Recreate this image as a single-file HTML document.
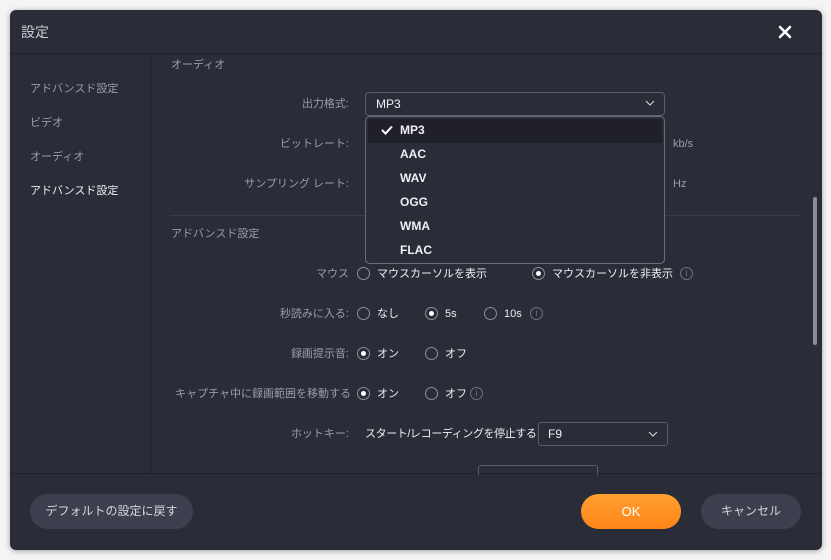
<!DOCTYPE html>
<html><head><meta charset="utf-8"><style>
*{margin:0;padding:0;box-sizing:border-box}
body{width:831px;height:560px;background:#f4f4f4;font-family:"Liberation Sans","Noto Sans CJK JP",sans-serif;position:relative;overflow:hidden}
.dlg{position:absolute;left:10px;top:10px;width:812px;height:540px;background:#2a2c37;border-radius:6px;box-shadow:0 1px 6px rgba(0,0,0,.35);overflow:hidden}
.a{position:absolute;white-space:nowrap;line-height:16px}
.t{color:#9a9daa;font-size:11px}
.w{color:#eef0f5;font-size:11px}
.L{position:absolute;right:473px;white-space:nowrap;color:#9a9daa;font-size:11px;line-height:16px}
.b{font-size:12px;font-weight:bold}
.r{position:absolute;width:13px;height:13px;border:1px solid #8d909c;border-radius:50%}
.r.on::after{content:"";position:absolute;left:3px;top:3px;width:5px;height:5px;border-radius:50%;background:#fff}
.i{position:absolute;width:13px;height:13px;border:1px solid #6f7280;border-radius:50%;color:#6f7280;font-size:9px;text-align:center;line-height:11px}
.btn{position:absolute;border-radius:18px;text-align:center;font-size:12px}
</style></head><body>
<div class="dlg">
 <div class="a" style="left:11px;top:14px;color:#c9cbd3;font-size:14px">設定</div>
 <svg style="position:absolute;left:768px;top:15px" width="14" height="14" viewBox="0 0 14 14"><path d="M2 2L12 12M12 2L2 12" stroke="#fff" stroke-width="2.6" stroke-linecap="round"/></svg>
 <div style="position:absolute;left:0;top:43px;width:812px;height:1px;background:#1f2129"></div>
 <div style="position:absolute;left:140px;top:44px;width:1px;height:419px;background:#1f2129"></div>
 <div style="position:absolute;left:0;top:463px;width:812px;height:1px;background:#1f2129"></div>
 <div class="a t" style="left:20px;top:71px">アドバンスド設定</div>
 <div class="a t" style="left:20px;top:105px">ビデオ</div>
 <div class="a t" style="left:20px;top:139px">オーディオ</div>
 <div class="a w" style="left:20px;top:173px">アドバンスド設定</div>

 <div class="a t" style="left:161px;top:47px">オーディオ</div>
 <div class="L" style="top:86px">出力格式:</div>
 <div class="L" style="top:126px">ビットレート:</div>
 <div class="L" style="top:166px">サンプリング レート:</div>
 <div class="a t" style="left:663px;top:126px">kb/s</div>
 <div class="a t" style="left:663px;top:166px">Hz</div>
 <div style="position:absolute;left:160px;top:205px;width:630px;height:1px;background:#3a3d48"></div>
 <div class="a t" style="left:161px;top:216px">アドバンスド設定</div>

 <div style="position:absolute;left:355px;top:82px;width:300px;height:24px;border:1px solid #5a5d68;border-radius:4px;background:#2a2c37"></div>
 <div class="a w b" style="left:366px;top:86px;font-weight:normal">MP3</div>
 <svg style="position:absolute;left:635px;top:90px" width="10" height="6" viewBox="0 0 10 6"><path d="M1 1L5 5L9 1" fill="none" stroke="#ddd" stroke-width="1"/></svg>
 <div style="position:absolute;left:355px;top:106px;width:300px;height:148px;border:1px solid #6a6d78;border-radius:5px;background:#2a2c37">
  <div style="position:absolute;left:2px;top:2px;width:294px;height:24px;background:#1f2028"></div>
 </div>
 <svg style="position:absolute;left:371px;top:115px" width="12" height="10" viewBox="0 0 12 10"><path d="M1 5L4.5 8.5L11 1.5" fill="none" stroke="#fff" stroke-width="2"/></svg>
 <div class="a w b" style="left:390px;top:112px">MP3</div>
 <div class="a w b" style="left:390px;top:136px">AAC</div>
 <div class="a w b" style="left:390px;top:160px">WAV</div>
 <div class="a w b" style="left:390px;top:184px">OGG</div>
 <div class="a w b" style="left:390px;top:208px">WMA</div>
 <div class="a w b" style="left:390px;top:232px">FLAC</div>

 <div class="L" style="top:256px">マウス</div>
 <div class="r" style="left:347px;top:257px"></div>
 <div class="a w" style="left:367px;top:256px">マウスカーソルを表示</div>
 <div class="r on" style="left:522px;top:257px"></div>
 <div class="a w" style="left:542px;top:256px">マウスカーソルを非表示</div>
 <div class="i" style="left:670px;top:257px">i</div>

 <div class="L" style="top:296px">秒読みに入る:</div>
 <div class="r" style="left:347px;top:297px"></div>
 <div class="a w" style="left:367px;top:296px">なし</div>
 <div class="r on" style="left:415px;top:297px"></div>
 <div class="a w" style="left:435px;top:296px">5s</div>
 <div class="r" style="left:474px;top:297px"></div>
 <div class="a w" style="left:494px;top:296px">10s</div>
 <div class="i" style="left:520px;top:297px">i</div>

 <div class="L" style="top:336px">録画提示音:</div>
 <div class="r on" style="left:347px;top:337px"></div>
 <div class="a w" style="left:367px;top:336px">オン</div>
 <div class="r" style="left:415px;top:337px"></div>
 <div class="a w" style="left:435px;top:336px">オフ</div>

 <div class="L" style="top:376px;right:471px">キャプチャ中に録画範囲を移動する</div>
 <div class="r on" style="left:347px;top:377px"></div>
 <div class="a w" style="left:367px;top:376px">オン</div>
 <div class="r" style="left:415px;top:377px"></div>
 <div class="a w" style="left:435px;top:376px">オフ</div>
 <div class="i" style="left:460px;top:377px">i</div>

 <div class="L" style="top:416px">ホットキー:</div>
 <div class="a w" style="left:355px;top:416px;letter-spacing:-0.4px">スタート/レコーディングを停止する</div>
 <div style="position:absolute;left:528px;top:412px;width:130px;height:24px;border:1px solid #5a5d68;border-radius:3px"></div>
 <div class="a w" style="left:538px;top:416px;font-size:12px">F9</div>
 <svg style="position:absolute;left:638px;top:421px" width="10" height="6" viewBox="0 0 10 6"><path d="M1 1L5 5L9 1" fill="none" stroke="#ddd" stroke-width="1"/></svg>
 <div style="position:absolute;left:468px;top:455px;width:120px;height:10px;border:1px solid #5a5d68;border-bottom:none;border-radius:3px 3px 0 0"></div>

 <div style="position:absolute;left:803px;top:187px;width:4px;height:148px;background:#8a8d98;border-radius:2px"></div>

 <div class="btn" style="left:20px;top:484px;width:163px;height:35px;line-height:35px;background:#3c3f4e;color:#d5d7de">デフォルトの設定に戻す</div>
 <div class="btn" style="left:571px;top:484px;width:100px;height:35px;line-height:35px;background:linear-gradient(#ffa030,#ff8418);color:#fff;font-size:13px">OK</div>
 <div class="btn" style="left:691px;top:484px;width:100px;height:35px;line-height:35px;background:#3c3f4e;color:#d5d7de">キャンセル</div>
</div>
</body></html>
